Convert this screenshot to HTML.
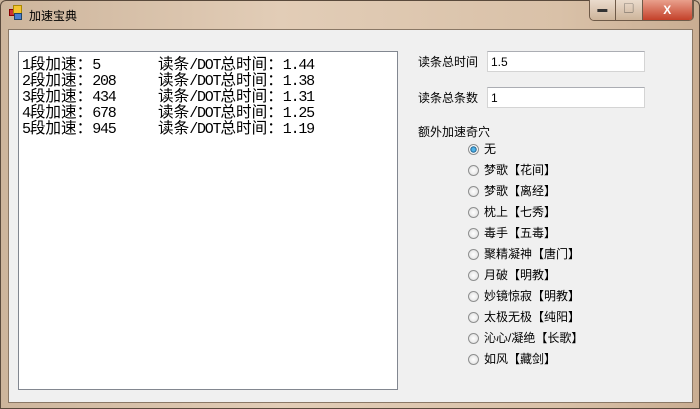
<!DOCTYPE html>
<html><head><meta charset="utf-8"><style>
body{margin:0;width:700px;height:409px;overflow:hidden;background:#c9b29a;font-family:"Liberation Sans","WenQuanYi Zen Hei","Noto Sans CJK SC",sans-serif;position:relative}
.frame{position:absolute;left:0;top:0;width:698px;height:407px;border:1px solid #5a4a3c;border-radius:6px 6px 0 0;background:linear-gradient(90deg,#cdb59c,#e2cdb7 40%,#d9c1a8 80%,#c9ad92)}
.client{position:absolute;left:8px;top:29px;width:683px;height:372px;background:#f0f0f0;border:1px solid #8a7866}
.a{position:absolute;white-space:nowrap}
.list{position:absolute;left:18px;top:51px;width:378px;height:337px;background:#fff;border:1px solid #828790;color:#000}
.ln{position:absolute;white-space:pre;font-family:"Liberation Mono",monospace;font-size:15px;letter-spacing:-1.2px;height:16px;line-height:16px}
.ln b{font-weight:normal;letter-spacing:0;font-family:"WenQuanYi Zen Hei","Noto Sans CJK SC",sans-serif;font-size:15.6px;display:inline-block;width:15.6px;text-align:center}
.inp{position:absolute;left:487px;width:158px;height:21px;background:#fff;border:1px solid #d4d4d4;border-top-color:#abadb3;font-size:12px;line-height:20px;padding-left:3px;box-sizing:border-box}
.lab{font-size:12px;color:#000}
.r{position:absolute;left:468px;font-size:12px;height:14px;line-height:14px}
.r i{display:inline-block;width:11px;height:11px;border-radius:50%;border:1px solid #8e8f8f;background:radial-gradient(#fff,#dcdcdc);vertical-align:-2px;margin-right:5px;box-sizing:border-box}
.r i.on{background:radial-gradient(#4fb3e8 25%,#1c5e8c 45%,#fff 55%,#e0e0e0)}
.btns{position:absolute;top:0;left:589px;width:103px;height:20px;border:1px solid #6e5a48;border-top:none;border-radius:0 0 5px 5px;overflow:hidden;display:flex}
.btns div{height:20px;border-right:1px solid #6e5a48;background:linear-gradient(#eadbcc,#cdb49a);color:#333;font-size:10px;text-align:center;line-height:20px}
</style></head><body>
<div class="frame"></div>
<div class="a" style="left:9px;top:9px;width:6px;height:5px;background:#c33;border:1px solid #800"></div>
<div class="a" style="left:13px;top:5px;width:7px;height:7px;background:#f4c430;border:1px solid #a80"></div>
<div class="a" style="left:14px;top:13px;width:6px;height:5px;background:#4a7fd0;border:1px solid #246"></div>
<div class="a" style="left:29px;top:7px;font-size:12px;color:#000">加速宝典</div>
<div class="btns"><div style="width:25px">▬</div><div style="width:26px">▢</div><div style="width:50px;background:linear-gradient(#e9a08c,#c4412a);color:#fff;font-weight:bold;font-size:12px">X</div></div>
<div class="client"></div>
<div class="list">
<div class="ln" style="left:3px;top:3px">1<b>段</b><b>加</b><b>速</b><b>：</b>5</div>
<div class="ln" style="left:3px;top:19px">2<b>段</b><b>加</b><b>速</b><b>：</b>208</div>
<div class="ln" style="left:3px;top:35px">3<b>段</b><b>加</b><b>速</b><b>：</b>434</div>
<div class="ln" style="left:3px;top:51px">4<b>段</b><b>加</b><b>速</b><b>：</b>678</div>
<div class="ln" style="left:3px;top:67px">5<b>段</b><b>加</b><b>速</b><b>：</b>945</div>
<div class="ln" style="left:139px;top:3px"><b>读</b><b>条</b>/DOT<b>总</b><b>时</b><b>间</b><b>：</b>1.44</div>
<div class="ln" style="left:139px;top:19px"><b>读</b><b>条</b>/DOT<b>总</b><b>时</b><b>间</b><b>：</b>1.38</div>
<div class="ln" style="left:139px;top:35px"><b>读</b><b>条</b>/DOT<b>总</b><b>时</b><b>间</b><b>：</b>1.31</div>
<div class="ln" style="left:139px;top:51px"><b>读</b><b>条</b>/DOT<b>总</b><b>时</b><b>间</b><b>：</b>1.25</div>
<div class="ln" style="left:139px;top:67px"><b>读</b><b>条</b>/DOT<b>总</b><b>时</b><b>间</b><b>：</b>1.19</div>
</div>
<div class="a lab" style="left:418px;top:53px">读条总时间</div>
<div class="inp" style="top:51px">1.5</div>
<div class="a lab" style="left:418px;top:89px">读条总条数</div>
<div class="inp" style="top:87px">1</div>
<div class="a lab" style="left:418px;top:123px">额外加速奇穴</div>
<div class="r" style="top:142px"><i class="on"></i>无</div>
<div class="r" style="top:163px"><i></i>梦歌【花间】</div>
<div class="r" style="top:184px"><i></i>梦歌【离经】</div>
<div class="r" style="top:205px"><i></i>枕上【七秀】</div>
<div class="r" style="top:226px"><i></i>毒手【五毒】</div>
<div class="r" style="top:247px"><i></i>聚精凝神【唐门】</div>
<div class="r" style="top:268px"><i></i>月破【明教】</div>
<div class="r" style="top:289px"><i></i>妙镜惊寂【明教】</div>
<div class="r" style="top:310px"><i></i>太极无极【纯阳】</div>
<div class="r" style="top:331px"><i></i>沁心/凝绝【长歌】</div>
<div class="r" style="top:352px"><i></i>如风【藏剑】</div>
</body></html>
